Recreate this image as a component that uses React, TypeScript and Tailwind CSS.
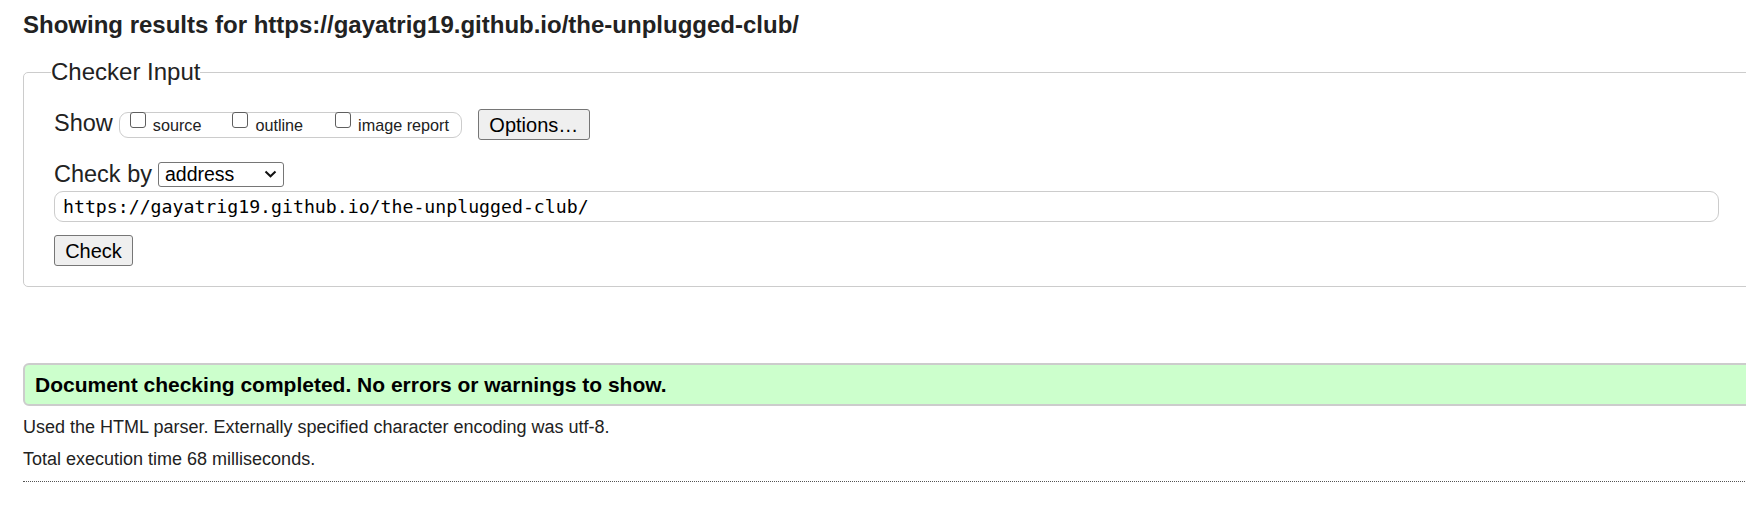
import React from 'react';

const url = 'https://gayatrig19.github.io/the-unplugged-club/';

function Box({ label, gap }: { label: string; gap: string }) {
    return (
        <label className={`flex items-start ${gap}`}>
            <span className="mt-[-0.5px] w-[16px] h-[16px] rounded-[3px] border-[1.5px] border-[#5f5f5f] bg-white" />
            <span className="ml-[7px] text-[16.2px] leading-[24px] text-[#222]">{label}</span>
        </label>
    );
}

export default function App() {
    return (
        <div className="w-full h-[508px] overflow-hidden bg-white pl-[23px] text-[#222] font-['Liberation_Sans',Arial,sans-serif]">
            <h2 className="pt-[11px] text-[24px] leading-[28px] font-bold text-[#222]">
                Showing results for {url}
            </h2>

            <fieldset className="mt-[20px] w-[1760px] border border-[#cccccc] rounded-[5px] pl-[30px] pt-[24px] pb-[20px]">
                <legend className="-ml-[3px] text-[24px] leading-[26px] text-[#222]">Checker Input</legend>

                <div className="flex items-center h-[31px]">
                    <span className="mb-[4px] text-[23.5px] leading-[26px]">Show</span>
                    <div className="ml-[6px] flex items-start h-[26px] w-[343px] border border-[#cccccc] rounded-[9px] pl-[10px]">
                        <Box label="source" gap="" />
                        <Box label="outline" gap="ml-[31px]" />
                        <Box label="image report" gap="ml-[32px]" />
                    </div>
                    <button className="ml-[16px] h-[31px] w-[112px] bg-[#efefef] border border-[#767676] rounded-[3px] text-[20px] leading-[24px] text-black">
                        Options…
                    </button>
                </div>

                <div className="mt-[21px] flex items-center h-[26px]">
                    <span className="text-[23.5px] leading-[26px]">Check by</span>
                    <div className="ml-[6px] flex items-center justify-between h-[25px] w-[126px] border border-[#767676] rounded-[3px] bg-white pl-[6px] pr-[6px]">
                        <span className="text-[19.5px] leading-[23px] text-black">address</span>
                        <svg width="13" height="8" viewBox="0 0 13 8" fill="none">
                            <path d="M1.5 1.5 L6.5 6.3 L11.5 1.5" stroke="#111" strokeWidth="2" />
                        </svg>
                    </div>
                </div>

                <div className="mt-[4px] w-[1665px] h-[31px] flex items-center border border-[#cccccc] rounded-[9px] bg-white pl-[8px]">
                    <span className="font-['DejaVu_Sans_Mono',monospace] text-[18.2px] leading-[24px] text-black">{url}</span>
                </div>

                <button className="mt-[13px] h-[31px] w-[79px] bg-[#efefef] border border-[#767676] rounded-[3px] text-[20px] leading-[24px] text-black">
                    Check
                </button>
            </fieldset>

            <div className="mt-[76px] w-[1760px] h-[43px] flex items-center bg-[#ccffcc] border-2 border-[#cccccc] rounded-[6px] pl-[10px]">
                <p className="text-[21px] leading-[24px] font-bold text-black">
                    Document checking completed. No errors or warnings to show.
                </p>
            </div>

            <p className="mt-[10px] text-[18px] leading-[22px]">
                Used the HTML parser. Externally specified character encoding was utf-8.
            </p>
            <p className="mt-[10px] text-[18px] leading-[22px]">Total execution time 68 milliseconds.</p>

            <div className="mt-[11px] w-[1760px] border-t border-dotted border-[#555]" />
        </div>
    );
}
